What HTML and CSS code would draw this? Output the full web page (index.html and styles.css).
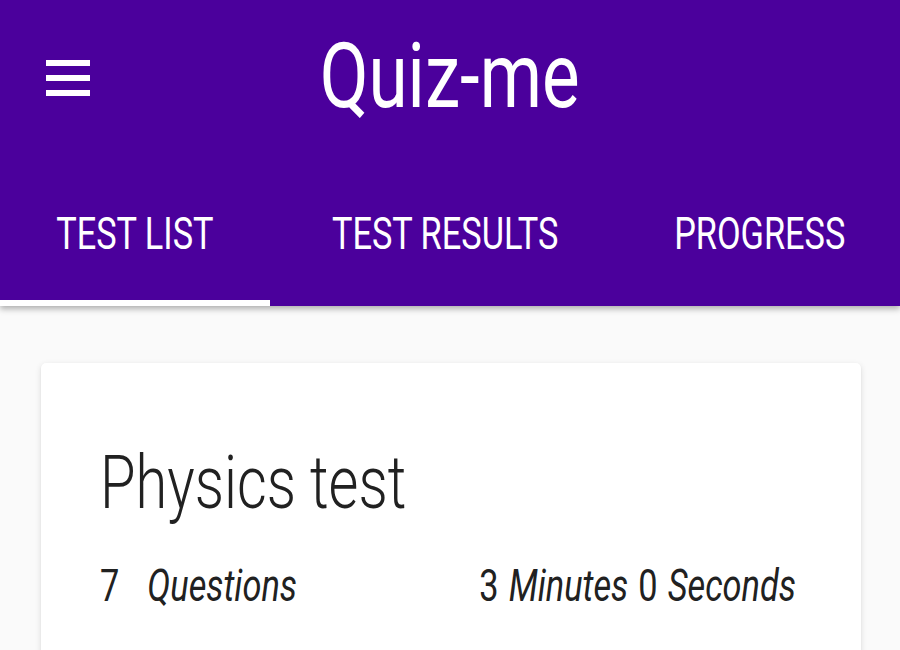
FILE: index.html
```html
<!DOCTYPE html>
<html lang="en">
<head>
<meta charset="utf-8">
<title>Quiz-me</title>
<link rel="stylesheet" href="styles.css">
</head>
<body>
<header class="app-header">
  <div class="toolbar">
    <button class="menu-btn" aria-label="Menu">
      <span class="bar"></span><span class="bar"></span><span class="bar"></span>
    </button>
    <h1 class="title"><span class="sx">Quiz-me</span></h1>
    <div class="spacer"></div>
  </div>
  <nav class="tabs">
    <div class="tab tab-list active"><span class="sx">TEST LIST</span></div>
    <div class="tab tab-results"><span class="sx">TEST RESULTS</span></div>
    <div class="tab tab-progress"><span class="sx">PROGRESS</span></div>
  </nav>
</header>
<main class="content">
  <section class="card">
    <h2 class="card-title"><span class="sx sx-left">Physics test</span></h2>
    <div class="stats">
      <span class="sx sx-left"><span class="num">7</span><em class="label label-q">Questions</em></span>
      <span class="sx sx-right duration"><span class="num">3</span> <em class="label">Minutes</em> <span class="num">0</span> <em class="label">Seconds</em></span>
    </div>
  </section>
</main>
</body>
</html>
```

FILE: styles.css
```css
* { box-sizing: border-box; }

html, body {
  margin: 0;
  padding: 0;
  height: 100%;
  overflow: hidden;
}

body {
  background: #fafafa;
  font-family: Roboto, "Liberation Sans", sans-serif;
}

.sx {
  display: inline-block;
  transform: scaleX(0.78);
  transform-origin: center;
  white-space: nowrap;
}
.sx-left { transform-origin: left center; }
.sx-right { transform-origin: right center; }

.app-header {
  background: #4b009c;
  color: #fff;
  box-shadow: 0 3px 6px rgba(0, 0, 0, 0.3);
  position: relative;
  z-index: 1;
}

.toolbar {
  height: 156px;
  display: grid;
  grid-template-columns: 1fr auto 1fr;
  align-items: center;
}

.menu-btn {
  justify-self: start;
  margin: 0 0 0 46px;
  padding: 0;
  background: none;
  border: 0;
  width: 44px;
  display: flex;
  flex-direction: column;
  gap: 9px;
  cursor: pointer;
}
.menu-btn .bar {
  display: block;
  width: 44px;
  height: 6px;
  background: #fff;
}

.title {
  margin: 0;
  font-size: 91px;
  font-weight: 400;
  line-height: 1;
  position: relative;
  top: -2px;
}

.tabs {
  display: grid;
  grid-template-columns: 270px 350px 280px;
  height: 150px;
}

.tab {
  display: flex;
  align-items: center;
  justify-content: center;
  font-size: 44px;
  font-weight: 400;
  line-height: 1;
  border-bottom: 6px solid transparent;
  padding-top: 11px;
}
.tab.active { border-bottom-color: #fff; }

.content {
  padding: 57px 39px 0 41px;
}

.card {
  background: #fff;
  border-radius: 5px;
  box-shadow: 0 2px 6px rgba(0, 0, 0, 0.12), 0 1px 2px rgba(0, 0, 0, 0.06);
  padding: 83px 65px 80px 59px;
  color: #212121;
  min-height: 400px;
}

.card-title {
  margin: 0;
  font-size: 74px;
  font-weight: 300;
  line-height: 1;
}

.stats {
  margin-top: 44px;
  display: flex;
  justify-content: space-between;
  font-size: 44px;
  line-height: 1;
  font-weight: 400;
}

.duration { word-spacing: 2px; }
.label { font-style: italic; }
.label-q { margin-left: 36px; }
```
